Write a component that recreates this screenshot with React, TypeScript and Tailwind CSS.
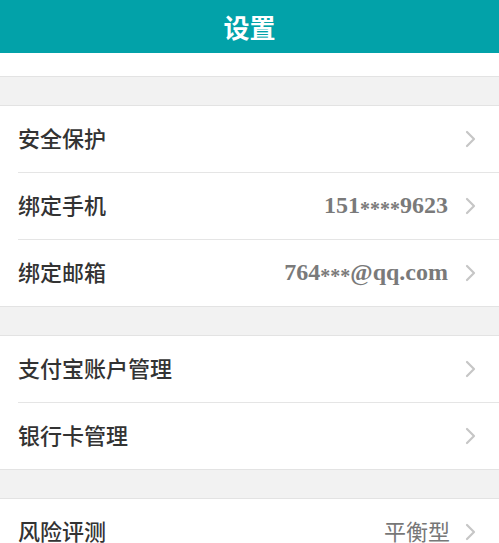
import React from "react";

type Row = { label: string; value?: string; serif?: boolean };

const groups: Row[][] = [
  [
    { label: "安全保护" },
    { label: "绑定手机", value: "151****9623", serif: true },
    { label: "绑定邮箱", value: "764***@qq.com", serif: true },
  ],
  [{ label: "支付宝账户管理" }, { label: "银行卡管理" }],
  [{ label: "风险评测", value: "平衡型" }],
];

function Chevron() {
  return (
    <svg width="14" height="20" viewBox="0 0 14 20" className="shrink-0" aria-hidden>
      <path d="M3 3l7 7-7 7" fill="none" stroke="#c6c6c6" strokeWidth="2.2" strokeLinecap="round" strokeLinejoin="round" />
    </svg>
  );
}

function Spacer() {
  return <div className="h-[30px] border-y border-[#e3e3e3] bg-[#f2f2f2]" />;
}

// the masked stars are set smaller than the digits
function Masked({ text }: { text: string }) {
  const parts = text.split(/(\*+)/);
  return (
    <>
      {parts.map((p, i) =>
        p.startsWith("*") ? (
          <span key={i} className="align-[-3px] text-[20px]">
            {p}
          </span>
        ) : (
          <span key={i}>{p}</span>
        )
      )}
    </>
  );
}

export default function App() {
  return (
    <div className="h-[543px] w-[499px] overflow-hidden bg-white font-['Noto_Sans_CJK_SC',sans-serif]">
      <header className="flex h-[53px] items-center justify-center bg-[#02a2a9]">
        <h1 className="text-[26px] font-bold leading-none text-white">设置</h1>
      </header>
      <div className="h-[23px] bg-white" />
      {groups.map((rows, gi) => (
        <div key={gi}>
          <Spacer />
          <ul className="bg-white pl-[18px]">
            {rows.map((row, ri) => (
              <li
                key={row.label}
                className={
                  "flex h-[66px] items-center pr-[21px] " +
                  (ri < rows.length - 1 ? "box-content border-b border-[#e5e5e5]" : "")
                }
              >
                <span className="flex-1 pb-[4px] text-[22px] font-medium leading-none text-[#333333]">
                  {row.label}
                </span>
                {row.value ? (
                  row.serif ? (
                    <span className="mr-[16px] font-['Liberation_Serif',serif] text-[24px] font-bold leading-none text-[#7a7a7a]">
                      <Masked text={row.value} />
                    </span>
                  ) : (
                    <span className="mr-[14px] pb-[4px] text-[22px] leading-none text-[#777777]">{row.value}</span>
                  )
                ) : null}
                <Chevron />
              </li>
            ))}
          </ul>
        </div>
      ))}
    </div>
  );
}
